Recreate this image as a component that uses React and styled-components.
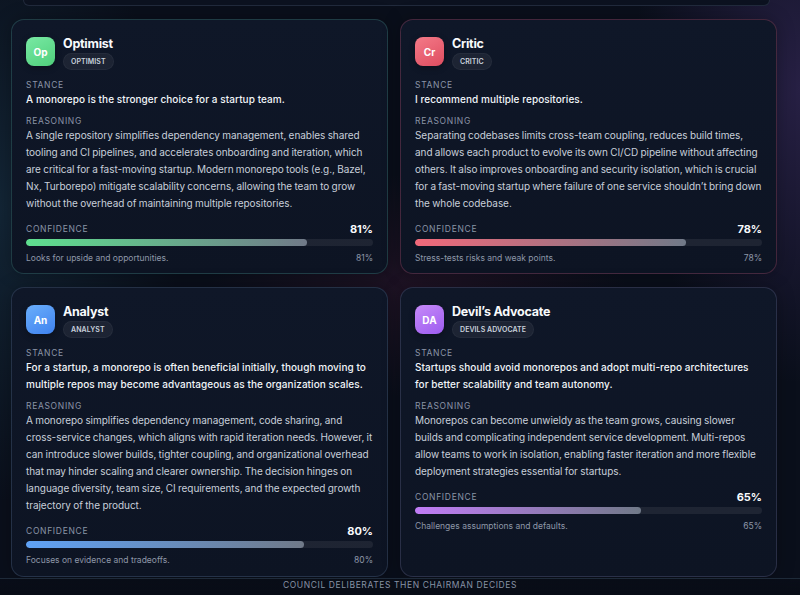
import styled, { createGlobalStyle } from 'styled-components'

const GlobalStyle = createGlobalStyle`
  * { box-sizing: border-box; }
  html, body {
    margin: 0;
    height: 100%;
    overflow: hidden;
  }
  body {
    font-family: 'Inter', 'Noto Sans', sans-serif;
    color: #e5e7eb;
    background:
      radial-gradient(ellipse 260px 420px at 0% 35%, rgba(34, 78, 102, 0.35), transparent 70%),
      radial-gradient(ellipse 240px 420px at 100% 15%, rgba(74, 52, 118, 0.45), transparent 70%),
      radial-gradient(ellipse 300px 160px at 52% 48%, rgba(70, 26, 54, 0.35), transparent 70%),
      #0a0f1b;
  }
`

const roles = [
  {
    id: 'optimist',
    initials: 'Op',
    name: 'Optimist',
    tag: 'OPTIMIST',
    color: '#5ee08f',
    avatar: 'linear-gradient(150deg, #79e9a4, #4fcf7b)',
    border: 'rgba(94, 200, 180, 0.22)',
    stance: 'A monorepo is the stronger choice for a startup team.',
    reasoning:
      'A single repository simplifies dependency management, enables shared tooling and CI pipelines, and accelerates onboarding and iteration, which are critical for a fast-moving startup. Modern monorepo tools (e.g., Bazel, Nx, Turborepo) mitigate scalability concerns, allowing the team to grow without the overhead of maintaining multiple repositories.',
    confidence: 81,
    note: 'Looks for upside and opportunities.',
  },
  {
    id: 'critic',
    initials: 'Cr',
    name: 'Critic',
    tag: 'CRITIC',
    color: '#f2697a',
    avatar: 'linear-gradient(150deg, #f47a88, #de4d60)',
    border: 'rgba(226, 92, 130, 0.26)',
    stance: 'I recommend multiple repositories.',
    reasoning:
      'Separating codebases limits cross-team coupling, reduces build times, and allows each product to evolve its own CI/CD pipeline without affecting others. It also improves onboarding and security isolation, which is crucial for a fast-moving startup where failure of one service shouldn’t bring down the whole codebase.',
    confidence: 78,
    note: 'Stress-tests risks and weak points.',
  },
  {
    id: 'analyst',
    initials: 'An',
    name: 'Analyst',
    tag: 'ANALYST',
    color: '#5fa2f6',
    avatar: 'linear-gradient(150deg, #6aaefb, #3f82ef)',
    border: 'rgba(120, 150, 190, 0.22)',
    stance:
      'For a startup, a monorepo is often beneficial initially, though moving to multiple repos may become advantageous as the organization scales.',
    reasoning:
      'A monorepo simplifies dependency management, code sharing, and cross-service changes, which aligns with rapid iteration needs. However, it can introduce slower builds, tighter coupling, and organizational overhead that may hinder scaling and clearer ownership. The decision hinges on language diversity, team size, CI requirements, and the expected growth trajectory of the product.',
    confidence: 80,
    note: 'Focuses on evidence and tradeoffs.',
  },
  {
    id: 'devil',
    initials: 'DA',
    name: 'Devil’s Advocate',
    tag: 'DEVILS ADVOCATE',
    color: '#c07cf6',
    avatar: 'linear-gradient(150deg, #c68af8, #9d5cf0)',
    border: 'rgba(140, 140, 190, 0.22)',
    stance:
      'Startups should avoid monorepos and adopt multi-repo architectures for better scalability and team autonomy.',
    reasoning:
      'Monorepos can become unwieldy as the team grows, causing slower builds and complicating independent service development. Multi-repos allow teams to work in isolation, enabling faster iteration and more flexible deployment strategies essential for startups.',
    confidence: 65,
    note: 'Challenges assumptions and defaults.',
  },
]

const Page = styled.div`
  height: 595px;
  display: flex;
  flex-direction: column;
  padding: 0 23px 0 11px;
`

const PrevPanel = styled.div`
  height: 6px;
  margin: 0 7px 0 12px;
  border: 1px solid rgba(110, 130, 160, 0.22);
  border-top: none;
  border-radius: 0 0 10px 10px;
  background: #0c1220;
`

const Grid = styled.div`
  margin-top: 13px;
  display: grid;
  grid-template-columns: 377px 377px;
  grid-template-rows: 255px 290px;
  column-gap: 12px;
  row-gap: 13px;
`

const Card = styled.section`
  display: flex;
  flex-direction: column;
  padding: 17px 14px 14px;
  border-radius: 13px;
  border: 1px solid ${(p) => p.$border};
  background: linear-gradient(180deg, #0f1728 0%, #0d1423 100%);
  box-shadow: 0 0 18px rgba(0, 0, 0, 0.25);
  overflow: hidden;
`

const Header = styled.div`
  display: flex;
  align-items: flex-start;
  gap: 8px;
`

const Avatar = styled.div`
  width: 29px;
  height: 29px;
  flex: none;
  border-radius: 8px;
  background: ${(p) => p.$bg};
  display: flex;
  align-items: center;
  justify-content: center;
  color: #fff;
  font-size: 10px;
  font-weight: 700;
  box-shadow: 0 2px 6px rgba(0, 0, 0, 0.3);
`

const NameBlock = styled.div`
  display: flex;
  flex-direction: column;
  align-items: flex-start;
`

const Name = styled.div`
  font-size: 12.5px;
  font-weight: 700;
  line-height: 14px;
  color: #f8fafc;
  letter-spacing: -0.02em;
`

const Tag = styled.span`
  margin-top: 2px;
  height: 17px;
  padding: 0 7px;
  display: inline-flex;
  align-items: center;
  border-radius: 9px;
  background: rgba(255, 255, 255, 0.06);
  border: 1px solid rgba(255, 255, 255, 0.04);
  color: #c9d1dc;
  font-size: 7px;
  font-weight: 600;
  letter-spacing: 0.01em;
`

const Label = styled.div`
  margin-top: ${(p) => p.$gap || 0}px;
  font-size: 8.5px;
  line-height: 12px;
  letter-spacing: 0.08em;
  color: #8a94a6;
  text-transform: uppercase;
`

const Stance = styled.p`
  margin: 0;
  font-size: 10px;
  line-height: 17px;
  font-weight: 500;
  letter-spacing: 0.06px;
  color: #f1f5f9;
`

const Reasoning = styled.p`
  margin: 0;
  font-size: 10px;
  line-height: 17px;
  letter-spacing: -0.05px;
  word-spacing: -0.4px;
  color: #c8cfda;
`

const ConfRow = styled.div`
  margin-top: 10px;
  display: flex;
  align-items: center;
  justify-content: space-between;
`

const ConfValue = styled.span`
  font-size: 11px;
  font-weight: 700;
  color: #f8fafc;
`

const Track = styled.div`
  flex: none;
  margin-top: 3px;
  height: 7px;
  border-radius: 4px;
  background: rgba(255, 255, 255, 0.07);
  overflow: hidden;
`

const Fill = styled.div`
  height: 100%;
  border-radius: 4px;
  background: linear-gradient(90deg, ${(p) => p.$color}, rgba(140, 150, 165, 0.75));
`

const Note = styled.div`
  margin-top: 6px;
  display: flex;
  justify-content: space-between;
  font-size: 8.5px;
  line-height: 12px;
  color: #8d97a8;
`

const Footer = styled.footer`
  margin: 1px -23px 0 -11px;
  flex: 1;
  border-top: 1px solid rgba(110, 150, 180, 0.22);
  display: flex;
  justify-content: center;
  padding-top: 1px;
  font-size: 8.5px;
  letter-spacing: 0.07em;
  color: #8792a5;
  background: linear-gradient(180deg, rgba(8, 12, 22, 0.6), rgba(8, 12, 22, 0.9));
`

const AgentCard = ({ role }) => (
  <Card $border={role.border}>
    <Header>
      <Avatar $bg={role.avatar}>{role.initials}</Avatar>
      <NameBlock>
        <Name>{role.name}</Name>
        <Tag>{role.tag}</Tag>
      </NameBlock>
    </Header>
    <Label $gap={9}>Stance</Label>
    <Stance>{role.stance}</Stance>
    <Label $gap={7}>Reasoning</Label>
    <Reasoning>{role.reasoning}</Reasoning>
    <ConfRow>
      <Label>Confidence</Label>
      <ConfValue>{role.confidence}%</ConfValue>
    </ConfRow>
    <Track>
      <Fill $color={role.color} style={{ width: `${role.confidence}%` }} />
    </Track>
    <Note>
      <span>{role.note}</span>
      <span>{role.confidence}%</span>
    </Note>
  </Card>
)

const App = () => (
  <>
    <GlobalStyle />
    <Page>
      <PrevPanel />
      <Grid>
        {roles.map((r) => (
          <AgentCard key={r.id} role={r} />
        ))}
      </Grid>
      <Footer>COUNCIL DELIBERATES THEN CHAIRMAN DECIDES</Footer>
    </Page>
  </>
)

export default App
